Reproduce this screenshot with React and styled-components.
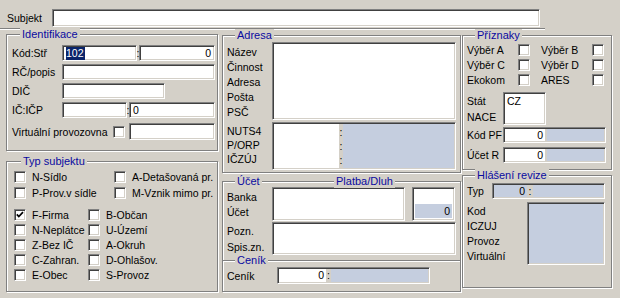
import React from 'react'
import styled, { createGlobalStyle } from 'styled-components'

const GlobalStyle = createGlobalStyle`
  html, body {
    margin: 0;
    padding: 0;
    background: #d4d0c8;
  }
  body {
    font-family: "Liberation Sans", Arial, sans-serif;
    font-size: 10.5px;
    color: #000;
  }
`

const BLUE = '#c5cedf'

const Window = styled.div`
  width: 620px;
  height: 298px;
  background: #d4d0c8;
  overflow: hidden;
`

const TopRow = styled.div`
  display: flex;
  align-items: center;
  height: 21px;
  padding: 7px 0 0 7px;
`

const Divider = styled.div`
  width: 545px;
  border-top: 1px solid #808080;
  border-bottom: 1px solid #fff;
`

const Body = styled.div`
  display: flex;
`

const Column = styled.div`
  display: flex;
  flex-direction: column;
  margin-left: ${p => p.$ml}px;
`

const Group = styled.div`
  position: relative;
  box-sizing: border-box;
  width: ${p => p.$w}px;
  height: ${p => p.$h}px;
  margin-top: ${p => p.$mt || 0}px;
  border: 1px solid #808080;
  ${p => p.$open && 'border-bottom: none;'}
  box-shadow: inset 1px 1px 0 #fff, 1px 1px 0 #fff;
  padding: ${p => p.$pad};
`

const Title = styled.span`
  position: absolute;
  top: -7px;
  left: ${p => p.$x ?? 12}px;
  padding: 0 2px;
  line-height: 13px;
  font-size: 11px;
  background: #d4d0c8;
  color: #0a0aa0;
  white-space: nowrap;
`

const Row = styled.div`
  display: flex;
  align-items: ${p => p.$top ? 'flex-start' : 'center'};
  height: ${p => p.$h || 16}px;
  margin-top: ${p => p.$mt || 0}px;
`

const Label = styled.span`
  flex: none;
  width: ${p => p.$w}px;
  white-space: nowrap;
`

const LabelCol = styled.div`
  flex: none;
  width: ${p => p.$w}px;
  padding-top: ${p => p.$pt || 0}px;
  line-height: ${p => p.$lh}px;
  white-space: nowrap;
`

const Field = styled.div`
  box-sizing: border-box;
  flex: none;
  width: ${p => p.$w}px;
  height: ${p => p.$h || 16}px;
  margin-left: ${p => p.$ml || 0}px;
  background: ${p => p.$bg || '#fff'};
  border: 1px solid;
  border-color: #808080 #fff #fff #808080;
  box-shadow: inset 1px 1px 0 #404040, inset -1px -1px 0 #d4d0c8;
  padding: ${p => p.$top ? '2px 3px' : '0 3px'};
  display: flex;
  align-items: ${p => p.$top ? 'flex-start' : 'center'};
  justify-content: ${p => p.$right ? 'flex-end' : 'flex-start'};
  line-height: 13px;
  white-space: nowrap;
  overflow: hidden;
`

const Split = styled(Field)`
  padding: 1px;
  align-items: stretch;
  justify-content: flex-start;
`

const Part = styled.div`
  ${p => p.$w ? `width: ${p.$w}px; flex: none;` : 'flex: 1;'}
  background: ${p => p.$bg || '#fff'};
  display: flex;
  flex-direction: column;
  justify-content: center;
  align-items: ${p => p.$right ? 'flex-end' : 'flex-start'};
  padding: 0 2px;
  line-height: 13px;
`

const Sep = styled.div`
  flex: none;
  width: ${p => p.$w}px;
  display: flex;
  flex-direction: column;
  justify-content: ${p => p.$lh ? 'flex-start' : 'center'};
  align-items: center;
  padding-top: ${p => p.$pt || 0}px;
  line-height: ${p => p.$lh || 13}px;
  background: #d4d0c8;
`

const Colon = styled.span`
  flex: none;
  width: 2px;
  display: flex;
  justify-content: center;
`

const Selected = styled.span`
  background: #0a246a;
  color: #fff;
  padding-right: 1px;
`

const Box = styled.span`
  box-sizing: border-box;
  flex: none;
  width: 12px;
  height: 12px;
  background: #fff;
  border: 1px solid;
  border-color: #808080 #fff #fff #808080;
  box-shadow: inset 1px 1px 0 #404040, inset -1px -1px 0 #d4d0c8;
  display: inline-flex;
  align-items: center;
  justify-content: center;
  margin-right: ${p => p.$mr || 0}px;
`

const CheckItem = styled.div`
  display: flex;
  align-items: center;
  gap: 6px;
  width: ${p => p.$w ? `${p.$w}px` : 'auto'};
  white-space: nowrap;
`

const Stack = styled.div`
  display: flex;
  flex-direction: column;
  margin-top: ${p => p.$mt || 0}px;
`

const TwoBox = styled(Field)`
  padding: 2px;
  flex-direction: column;
  align-items: stretch;
  justify-content: stretch;
`

function Check({ checked, mr }) {
  return (
    <Box $mr={mr}>
      {checked && (
        <svg width="8" height="8" viewBox="0 0 8 8">
          <path d="M0.8 3.4 L2.8 5.6 L7 1.2" fill="none" stroke="#000" strokeWidth="1.7" />
        </svg>
      )}
    </Box>
  )
}

function CheckLabel({ w, label, checked }) {
  return (
    <CheckItem $w={w}>
      <Check checked={checked} />
      <span>{label}</span>
    </CheckItem>
  )
}

export default function App() {
  return (
    <Window>
      <GlobalStyle />
      <TopRow>
        <Label $w={45}>Subjekt</Label>
        <Field $w={488} $h={18} />
      </TopRow>
      <Divider />
      <Body>
        <Column $ml={6}>
          <Group $w={212} $h={117} $mt={4} $pad="10px 0 0 5px">
            <Title $x={13}>Identifikace</Title>
            <Row>
              <Label $w={50}>Kód:Stř</Label>
              <Field $w={75}><Selected>102</Selected></Field>
              <Colon>:</Colon>
              <Field $w={76} $right>0</Field>
            </Row>
            <Row $mt={3}>
              <Label $w={50}>RČ/popis</Label>
              <Field $w={153} />
            </Row>
            <Row $mt={3}>
              <Label $w={50}>DIČ</Label>
              <Field $w={103} />
            </Row>
            <Row $mt={3}>
              <Label $w={50}>IČ:IČP</Label>
              <Field $w={65} />
              <Colon>:</Colon>
              <Field $w={86}>0</Field>
            </Row>
            <Row $mt={5} $h={17}>
              <Label $w={101}>Virtuální provozovna</Label>
              <Check mr={4} />
              <Field $w={86} $h={17} />
            </Row>
          </Group>
          <Group $w={212} $h={131} $mt={10} $pad="7px 0 0 7px">
            <Title $x={14}>Typ subjektu</Title>
            <Row $h={15}>
              <CheckLabel w={100} label="N-Sídlo" />
              <CheckLabel label="A-Detašovaná pr." />
            </Row>
            <Row $h={15} $mt={1}>
              <CheckLabel w={100} label="P-Prov.v sídle" />
              <CheckLabel label="M-Vznik mimo pr." />
            </Row>
            <Stack $mt={7}>
              <Row $h={15}>
                <CheckLabel w={74} label="F-Firma" checked />
                <CheckLabel label="B-Občan" />
              </Row>
              <Row $h={15}>
                <CheckLabel w={74} label="N-Neplátce" />
                <CheckLabel label="U-Území" />
              </Row>
              <Row $h={15}>
                <CheckLabel w={74} label="Z-Bez IČ" />
                <CheckLabel label="A-Okruh" />
              </Row>
              <Row $h={15}>
                <CheckLabel w={74} label="C-Zahran." />
                <CheckLabel label="D-Ohlašov." />
              </Row>
              <Row $h={15}>
                <CheckLabel w={74} label="E-Obec" />
                <CheckLabel label="S-Provoz" />
              </Row>
            </Stack>
          </Group>
        </Column>

        <Column $ml={4}>
          <Group $w={239} $h={138} $mt={5} $pad="6px 0 0 4px">
            <Title>Adresa</Title>
            <Row $top $h={78}>
              <LabelCol $w={45} $pt={3} $lh={15}>
                <div>Název</div>
                <div>Činnost</div>
                <div>Adresa</div>
                <div>Pošta</div>
                <div>PSČ</div>
              </LabelCol>
              <Field $w={184} $h={78} />
            </Row>
            <Row $top $h={48} $mt={2}>
              <LabelCol $w={45} $pt={2} $lh={14}>
                <div>NUTS4</div>
                <div>P/ORP</div>
                <div>IČZÚJ</div>
              </LabelCol>
              <Split $w={184} $h={48}>
                <Part $w={61} />
                <Sep $w={4} $pt={1} $lh={14}>
                  <span>:</span>
                  <span>:</span>
                  <span>:</span>
                </Sep>
                <Part $bg={BLUE} />
              </Split>
            </Row>
          </Group>
          <Group $w={239} $h={79} $mt={8} $open $pad="5px 0 0 4px">
            <Title>Účet</Title>
            <Title $x={111}>Platba/Dluh</Title>
            <Row $top $h={34}>
              <LabelCol $w={45} $pt={3} $lh={15}>
                <div>Banka</div>
                <div>Účet</div>
              </LabelCol>
              <Field $w={133} $h={34} />
              <TwoBox $w={43} $h={34} $ml={7}>
                <Part />
                <Part $bg={BLUE} $right>0</Part>
              </TwoBox>
            </Row>
            <Row $top $h={33} $mt={1}>
              <LabelCol $w={45} $pt={1} $lh={16}>
                <div>Pozn.</div>
                <div>Spis.zn.</div>
              </LabelCol>
              <Field $w={184} $h={33} />
            </Row>
          </Group>
          <Group $w={239} $h={32} $pad="6px 0 0 4px">
            <Title>Ceník</Title>
            <Row $h={17}>
              <Label $w={50}>Ceník</Label>
              <Split $w={153} $h={17}>
                <Part $w={43} $right>0</Part>
                <Sep $w={5}>:</Sep>
                <Part $bg={BLUE} />
              </Split>
            </Row>
          </Group>
        </Column>

        <Column $ml={1}>
          <Group $w={150} $h={135} $mt={5} $pad="6px 0 0 4px">
            <Title>Příznaky</Title>
            <Row $h={15}>
              <Label $w={51}>Výběr A</Label>
              <Check mr={11} />
              <Label $w={51}>Výběr B</Label>
              <Check />
            </Row>
            <Row $h={15}>
              <Label $w={51}>Výběr C</Label>
              <Check mr={11} />
              <Label $w={51}>Výběr D</Label>
              <Check />
            </Row>
            <Row $h={15}>
              <Label $w={51}>Ekokom</Label>
              <Check mr={11} />
              <Label $w={51}>ARES</Label>
              <Check />
            </Row>
            <Row $top $h={33} $mt={5}>
              <LabelCol $w={36} $pt={1} $lh={16}>
                <div>Stát</div>
                <div>NACE</div>
              </LabelCol>
              <Field $w={43} $h={33} $top>CZ</Field>
            </Row>
            <Row $mt={2}>
              <Label $w={36}>Kód PF</Label>
              <Split $w={103}>
                <Part $w={36} $right>0</Part>
                <Sep $w={2} />
                <Part $bg={BLUE} />
              </Split>
            </Row>
            <Row $mt={4}>
              <Label $w={36}>Účet R</Label>
              <Split $w={103}>
                <Part $w={36} $right>0</Part>
                <Sep $w={2} />
                <Part $bg={BLUE} />
              </Split>
            </Row>
          </Group>
          <Group $w={150} $h={113} $mt={5} $pad="7px 0 0 4px">
            <Title>Hlášení revize</Title>
            <Row>
              <Label $w={25}>Typ</Label>
              <Split $w={113}>
                <Part $w={29} $bg={BLUE} $right>0</Part>
                <Sep $w={6}>:</Sep>
                <Part $bg={BLUE} />
              </Split>
            </Row>
            <Row $top $h={63} $mt={3}>
              <LabelCol $w={60} $pt={2} $lh={15}>
                <div>Kod</div>
                <div>ICZUJ</div>
                <div>Provoz</div>
                <div>Virtuální</div>
              </LabelCol>
              <Field $w={78} $h={63} $bg={BLUE} />
            </Row>
          </Group>
        </Column>
      </Body>
    </Window>
  )
}
